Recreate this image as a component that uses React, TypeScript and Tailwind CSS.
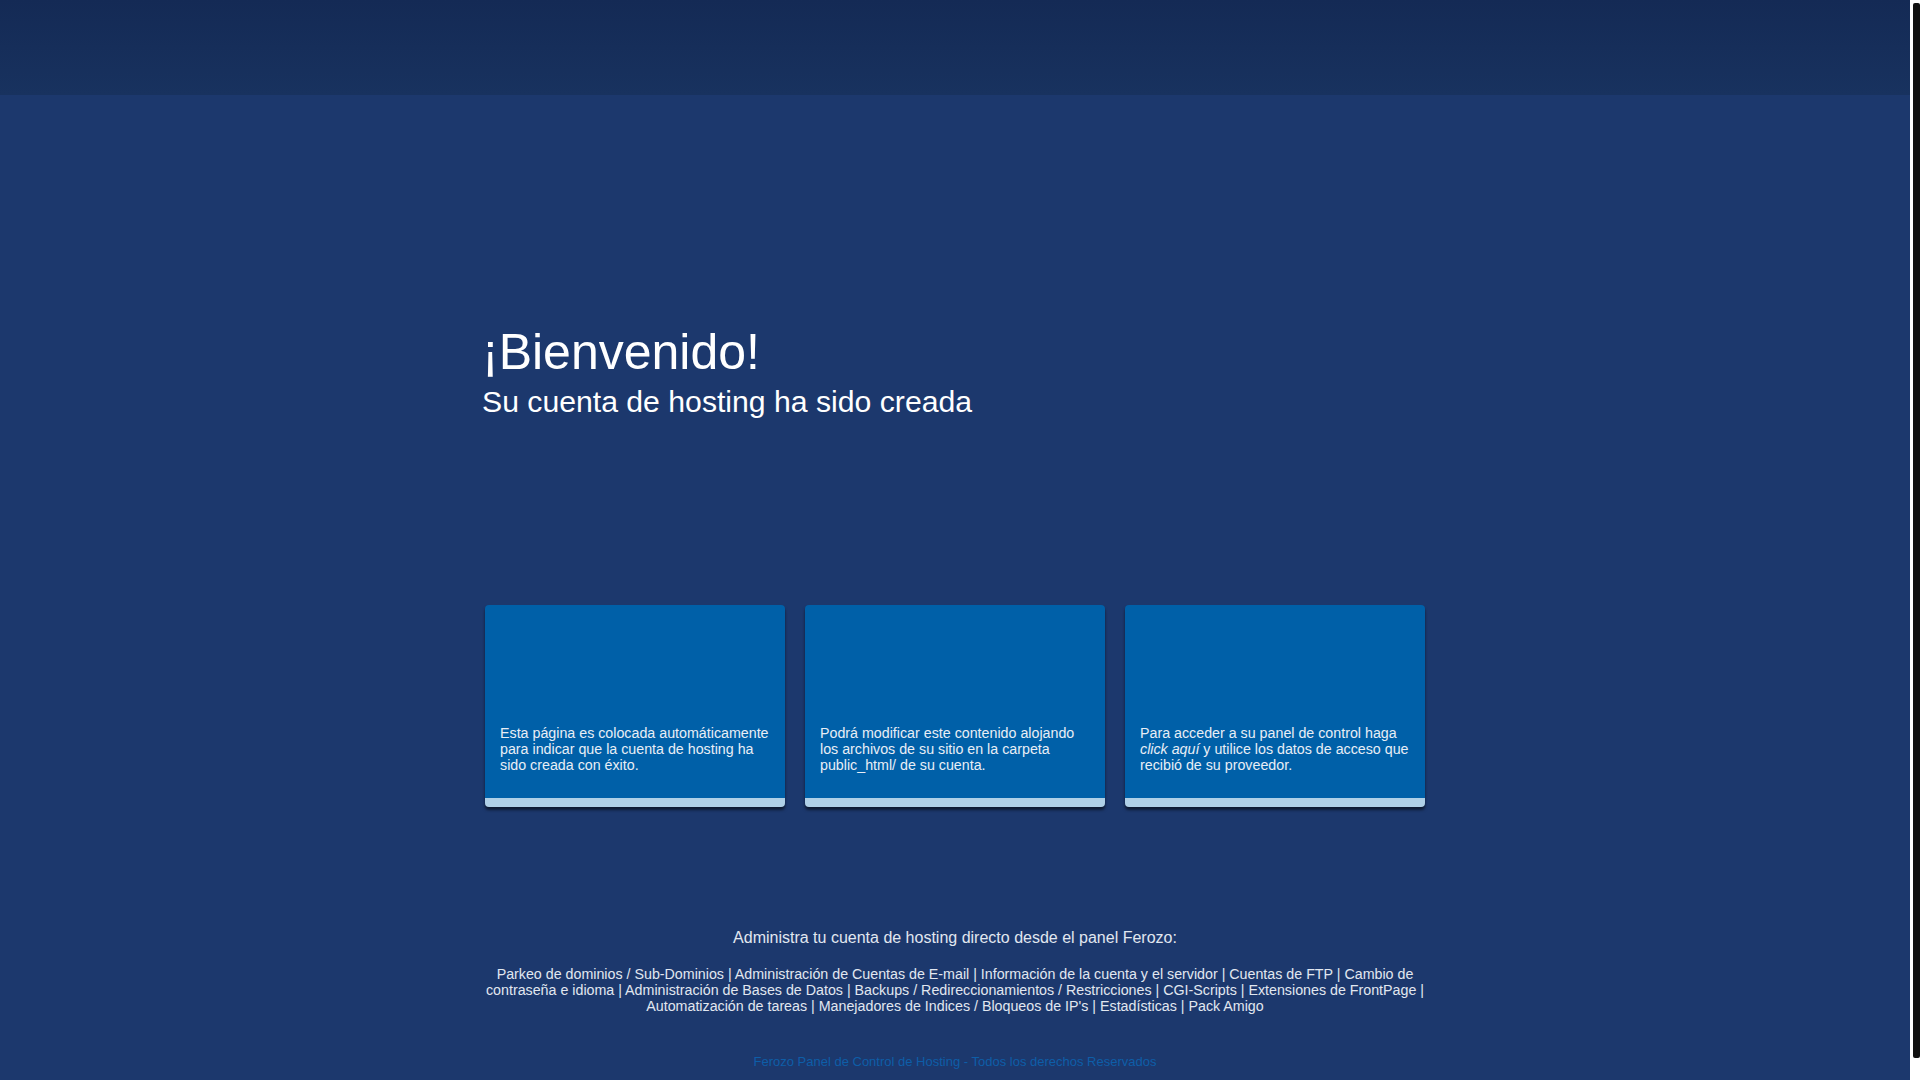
const links = [
  "Parkeo de dominios / Sub-Dominios",
  "Administración de Cuentas de E-mail",
  "Información de la cuenta y el servidor",
  "Cuentas de FTP",
  "Cambio de contraseña e idioma",
  "Administración de Bases de Datos",
  "Backups / Redireccionamientos / Restricciones",
  "CGI-Scripts",
  "Extensiones de FrontPage",
  "Automatización de tareas",
  "Manejadores de Indices / Bloqueos de IP's",
  "Estadísticas",
  "Pack Amigo",
];

function InfoCard({ children }: { children: React.ReactNode }) {
  return (
    <div className="h-[202px] rounded-[4px] bg-[#0060a8] border-b-[9px] border-[#afd0e7] px-[15px] pt-[120px] text-[14.25px] leading-[16px] text-[#e8eef6] shadow-[0_3px_3px_rgba(0,0,0,0.55)]">
      {children}
    </div>
  );
}

export default function App() {
  return (
    <div className="min-h-screen w-full flex bg-[#1c386d] font-['Liberation_Sans',Arial,sans-serif]">
      <div className="flex-1 pb-[36px]">
        {/* top band */}
        <header className="h-[95px] w-full bg-gradient-to-b from-[#142a55] to-[#18325f]" />

        <main className="w-[940px] mx-auto">
          {/* welcome */}
          <div className="pt-[228px] -ml-[3px] text-white">
            <h1 className="text-[50px] leading-[58px] font-normal">¡Bienvenido!</h1>
            <p className="mt-[4px] text-[30.2px] leading-[34px]">Su cuenta de hosting ha sido creada</p>
          </div>

          {/* cards */}
          <div className="mt-[186px] grid grid-cols-3 gap-[20px]">
            <InfoCard>
              Esta página es colocada automáticamente para indicar que la cuenta de hosting ha sido creada con éxito.
            </InfoCard>
            <InfoCard>
              Podrá modificar este contenido alojando los archivos de su sitio en la carpeta public_html/ de su cuenta.
            </InfoCard>
            <InfoCard>
              Para acceder a su panel de control haga <em>click aquí</em> y utilice los datos de acceso que recibió de su proveedor.
            </InfoCard>
          </div>

          {/* panel links */}
          <div className="mt-[122px] text-center text-[#e1e7f0]">
            <p className="text-[16px] leading-[18px]">Administra tu cuenta de hosting directo desde el panel Ferozo:</p>
            <p className="mt-[19px] text-[14.25px] leading-[16px]">{links.join(" | ")}</p>
            <p className="mt-[40px] text-[13px] leading-[15px] text-[#0e5ea8]">
              Ferozo Panel de Control de Hosting - Todos los derechos Reservados
            </p>
          </div>
        </main>
      </div>

      {/* scrollbar strip */}
      <div className="w-[10px] shrink-0 bg-white pl-[3px] pt-[3px]">
        <div className="h-[1055px] w-[7px] rounded-[2px] bg-[#111111]" />
      </div>
    </div>
  );
}
